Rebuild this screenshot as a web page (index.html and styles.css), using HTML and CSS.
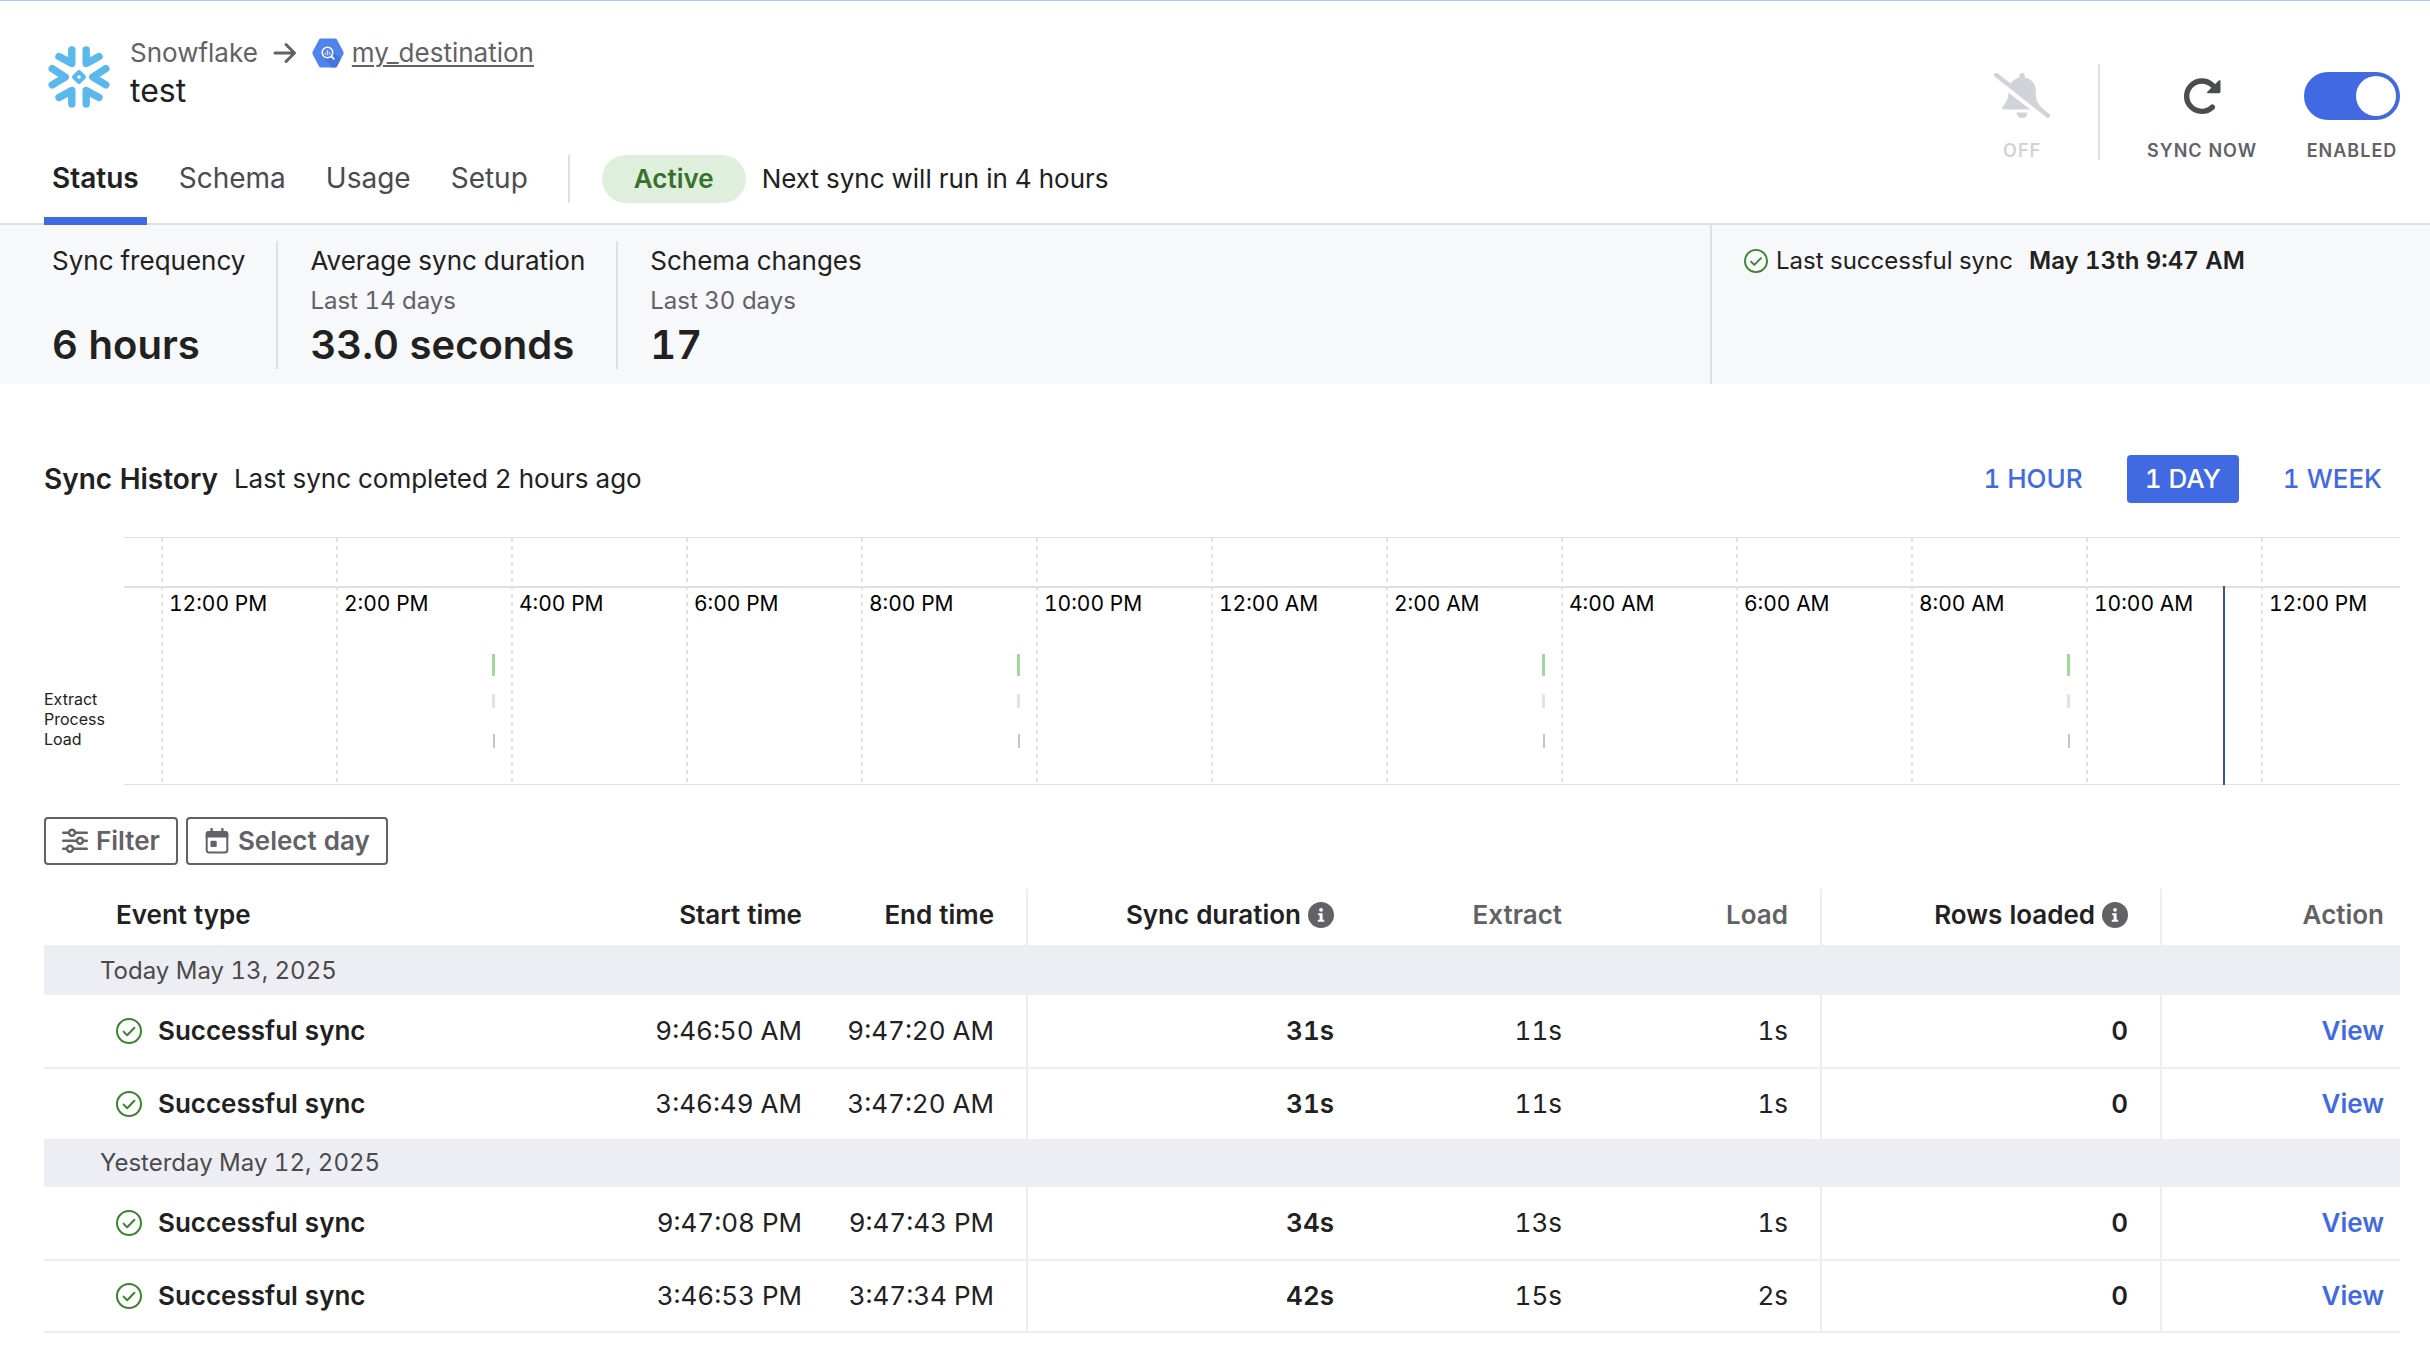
FILE: index.html
```html
<!DOCTYPE html>
<html lang="en">
<head>
<meta charset="utf-8">
<meta name="viewport" content="width=device-width, initial-scale=1">
<title>test – Connection status</title>
<link rel="stylesheet" href="styles.css">
</head>
<body>
<svg class="sprite" aria-hidden="true">
  <symbol id="check" viewBox="0 0 26 26">
    <circle cx="13" cy="13" r="12" fill="none" stroke="currentColor" stroke-width="2"/>
    <path d="M7.6 13.6l3.6 3.6 7.2-7.4" fill="none" stroke="currentColor" stroke-width="2" stroke-linecap="round" stroke-linejoin="round"/>
  </symbol>
  <symbol id="info" viewBox="0 0 26 26">
    <circle cx="13" cy="13" r="13" fill="currentColor"/>
    <circle cx="13" cy="7.8" r="1.9" fill="#fff"/>
    <path d="M10.2 11.2h4.4v6.6h1.6v2h-6.4v-2h1.8v-4.6h-1.4z" fill="#fff"/>
  </symbol>
</svg>

<header class="header">
  <div class="header-top">
    <svg class="logo" viewBox="0 0 62 62" aria-hidden="true">
      <g fill="none" stroke="#5bb8ec" stroke-width="7.4" stroke-linecap="round" stroke-linejoin="round">
        <path d="M23.8 4V17.6L11 10.6M38.2 4V17.6L51 10.6"/>
        <path d="M23.8 58V44.400L11 51.400M38.2 58V44.400L51 51.400"/>
        <path d="M4.200 22.700L17.200 31L4.200 38.800M57.800 22.700L44.800 31L57.800 38.800"/>
      </g>
      <path d="M31 26L36 31L31 36L26 31Z" fill="none" stroke="#5bb8ec" stroke-width="4" stroke-linejoin="round"/>
    </svg>
    <div class="titles">
      <div class="breadcrumb">
        <span>Snowflake</span>
        <svg class="arrow" viewBox="0 0 24 22" aria-hidden="true"><path d="M2 11H21M13 2.500L21.500 11L13 19.500" fill="none" stroke="currentColor" stroke-width="3" stroke-linecap="round" stroke-linejoin="round"/></svg>
        <svg class="hex" viewBox="0 0 32 30" aria-hidden="true">
          <path d="M9 0.500H23Q24.200 0.500 24.900 1.600L31.300 13.600Q32 15 31.300 16.400L24.900 28.400Q24.200 29.500 23 29.500H9Q7.800 29.500 7.100 28.400L0.700 16.400Q0 15 0.700 13.600L7.100 1.600Q7.800 0.500 9 0.500Z" fill="#5183ec"/>
          <path d="M21 13L28.500 21.500L24.900 28.400Q24.200 29.500 23 29.500H19.500L12 19.500Z" fill="#4674d8"/>
          <circle cx="15.500" cy="14.500" r="5.300" fill="#5183ec" stroke="#fff" stroke-width="1.500"/>
          <path d="M13.400 14.500v2M15.500 12v5.200M17.600 13.800v2.600" stroke="#cfdcfa" stroke-width="1.300"/>
          <path d="M19.400 18.400L21.800 20.800" stroke="#fff" stroke-width="1.800" stroke-linecap="round"/>
        </svg>
        <a class="dest" href="#destination">my_destination</a>
      </div>
      <h1 class="name">test</h1>
    </div>
  </div>

  <div class="header-bottom">
    <nav class="tabs" aria-label="Connection">
      <a class="tab active" href="#status">Status</a>
      <a class="tab" href="#schema">Schema</a>
      <a class="tab" href="#usage">Usage</a>
      <a class="tab" href="#setup">Setup</a>
    </nav>
    <div class="state">
      <span class="pill">Active</span>
      <span>Next sync will run in 4 hours</span>
    </div>
  </div>

  <div class="controls">
    <button class="control off" type="button">
      <svg class="control-icon" viewBox="0 0 56 48" aria-hidden="true">
        <path d="M28 1c1.700 0 2.800 1.200 2.800 3v1.600c6.600 1.200 11 6.400 11 13.200v4c0 4.600 1.600 8.200 4.700 11.600L49 38L15.500 13.300C17.800 9.200 21 6.500 25.300 5.600V4c0-1.800 1.100-3 2.700-3z" fill="currentColor"/>
        <path d="M14.300 20.500L36.300 37.600H9.800C8 37.600 7.600 35.600 8.700 34.400C12.400 30.400 14.300 26.800 14.300 22z" fill="currentColor"/>
        <path d="M22.500 40.600h11a5.500 5.500 0 0 1-11 0z" fill="currentColor"/>
        <path d="M2.200 3L53.800 43.600" stroke="currentColor" stroke-width="4.400" stroke-linecap="round"/>
      </svg>
      <span>OFF</span>
    </button>
    <button class="control sync" type="button">
      <svg class="control-icon" viewBox="0 0 56 48" aria-hidden="true">
        <path d="M38.300 35.200A15.200 15.200 0 1 1 38.600 13.400" fill="none" stroke="currentColor" stroke-width="5.400" stroke-linecap="round"/>
        <path d="M44.800 8.400Q46.500 7 46.500 9.400V19.500Q46.500 21.300 44.700 21.300H34.200Q32 21.300 33.600 19.600Z" fill="currentColor"/>
      </svg>
      <span>SYNC NOW</span>
    </button>
    <label class="control toggle">
      <input class="switch" type="checkbox" checked>
      <span>ENABLED</span>
    </label>
  </div>
</header>

<section class="summary">
  <dl class="stats">
    <div class="stat"><dt>Sync frequency</dt><dd class="value">6 hours</dd></div>
    <div class="stat"><dt>Average sync duration</dt><dd class="period">Last 14 days</dd><dd class="value">33.0 seconds</dd></div>
    <div class="stat"><dt>Schema changes</dt><dd class="period">Last 30 days</dd><dd class="value">17</dd></div>
  </dl>
  <div class="last-sync">
    <svg class="last-icon" aria-hidden="true"><use href="#check"/></svg>
    <span>Last successful sync</span>
    <strong>May 13th 9:47 AM</strong>
  </div>
</section>

<main class="main">
  <div class="history-head">
    <h2>Sync History</h2>
    <span>Last sync completed 2 hours ago</span>
    <div class="ranges">
      <button class="range" type="button">1 HOUR</button>
      <button class="range selected" type="button">1 DAY</button>
      <button class="range" type="button">1 WEEK</button>
    </div>
  </div>

  <div class="chart">
    <div class="lanes"><span>Extract</span><span>Process</span><span>Load</span></div>
    <div class="plot">
      <div class="ticks">
        <span class="lead"></span>
        <span>12:00 PM</span><span>2:00 PM</span><span>4:00 PM</span><span>6:00 PM</span><span>8:00 PM</span><span>10:00 PM</span><span>12:00 AM</span><span>2:00 AM</span><span>4:00 AM</span><span>6:00 AM</span><span>8:00 AM</span><span>10:00 AM</span><span>12:00 PM</span>
      </div>
      <div class="event" style="left:16.17%"><i></i><i></i><i></i></div>
      <div class="event" style="left:39.24%"><i></i><i></i><i></i></div>
      <div class="event" style="left:62.3%"><i></i><i></i><i></i></div>
      <div class="event" style="left:85.37%"><i></i><i></i><i></i></div>
      <div class="now" style="left:92.22%"></div>
    </div>
  </div>

  <div class="tools">
    <button class="tool" type="button">
      <svg viewBox="0 0 26 26" aria-hidden="true">
        <g fill="none" stroke="currentColor" stroke-width="2.400" stroke-linecap="round">
          <path d="M1.200 4.800H6.500M13.500 4.800H24.800M1.200 12.800H14.500M21.500 12.800H24.800M1.200 20.800H4.500M11.500 20.800H24.800"/>
          <circle cx="10" cy="4.800" r="3"/><circle cx="18" cy="12.800" r="3"/><circle cx="8" cy="20.800" r="3"/>
        </g>
      </svg>
      Filter
    </button>
    <button class="tool" type="button">
      <svg viewBox="0 0 26 26" aria-hidden="true">
        <rect x="2.700" y="4" width="20.600" height="20.500" rx="2.500" fill="none" stroke="currentColor" stroke-width="2"/>
        <path d="M1.700 9.500V6Q1.700 3 4.700 3H21.300Q24.300 3 24.300 6V9.500Z" fill="currentColor"/>
        <path d="M7.600 4V1M18.400 4V1" stroke="currentColor" stroke-width="2.400" stroke-linecap="round"/>
        <rect x="6.500" y="12.800" width="6.200" height="6.200" rx="1" fill="currentColor"/>
      </svg>
      Select day
    </button>
  </div>

  <table class="events">
    <colgroup><col><col class="c-start"><col class="c-end"><col class="c-sync"><col class="c-part"><col class="c-part"><col class="c-rows"><col class="c-action"></colgroup>
    <thead>
      <tr>
        <th class="type">Event type</th><th>Start time</th><th class="line">End time</th>
        <th>Sync duration <svg class="info" aria-hidden="true"><use href="#info"/></svg></th>
        <th class="dim">Extract</th><th class="dim line">Load</th>
        <th class="line">Rows loaded <svg class="info" aria-hidden="true"><use href="#info"/></svg></th>
        <th class="dim">Action</th>
      </tr>
    </thead>
    <tbody>
      <tr><th class="group" colspan="8">Today May 13, 2025</th></tr>
      <tr class="row"><td class="type"><svg class="ok" aria-hidden="true"><use href="#check"/></svg>Successful sync</td><td>9:46:50 AM</td><td class="line">9:47:20 AM</td><td class="strong">31s</td><td>11s</td><td class="line">1s</td><td class="strong line">0</td><td><a class="view" href="#sync-1">View</a></td></tr>
      <tr class="row"><td class="type"><svg class="ok" aria-hidden="true"><use href="#check"/></svg>Successful sync</td><td>3:46:49 AM</td><td class="line">3:47:20 AM</td><td class="strong">31s</td><td>11s</td><td class="line">1s</td><td class="strong line">0</td><td><a class="view" href="#sync-2">View</a></td></tr>
    </tbody>
    <tbody>
      <tr><th class="group" colspan="8">Yesterday May 12, 2025</th></tr>
      <tr class="row"><td class="type"><svg class="ok" aria-hidden="true"><use href="#check"/></svg>Successful sync</td><td>9:47:08 PM</td><td class="line">9:47:43 PM</td><td class="strong">34s</td><td>13s</td><td class="line">1s</td><td class="strong line">0</td><td><a class="view" href="#sync-3">View</a></td></tr>
      <tr class="row"><td class="type"><svg class="ok" aria-hidden="true"><use href="#check"/></svg>Successful sync</td><td>3:46:53 PM</td><td class="line">3:47:34 PM</td><td class="strong">42s</td><td>15s</td><td class="line">2s</td><td class="strong line">0</td><td><a class="view" href="#sync-4">View</a></td></tr>
    </tbody>
  </table>
</main>
</body>
</html>
```
FILE: styles.css
```css
:root {
  --text: #212121;
  --muted: #616166;
  --blue: #4169e1;
  --line: #dfe0e4;
  --soft: #edeef3;
  --green: #3d8132;
}

* { box-sizing: border-box; }

body {
  margin: 0;
  border-top: 1px solid #a8c7fa;
  background: #fff;
  color: var(--text);
  font: 400 26px/32px Inter, "Liberation Sans", sans-serif;
  font-variant-numeric: tabular-nums;
}

h1, h2, dl, dd { margin: 0; }
button { font: inherit; background: none; border: 0; padding: 0; cursor: pointer; }
svg { display: block; }
.sprite { position: absolute; width: 0; height: 0; }

/* Header */
.header {
  display: grid;
  grid-template-columns: 1fr auto;
  padding: 34px 30px 0 44px;
  border-bottom: 2px solid var(--line);
}
.header-top { display: flex; gap: 20px; padding: 2px 0 0 4px; height: 104px; }
.logo { width: 62px; height: 62px; margin-top: 9px; }
.breadcrumb { display: flex; align-items: center; color: var(--muted); }
.arrow { width: 24px; height: 22px; margin: 0 15px; }
.hex { width: 32px; height: 30px; margin-right: 8px; }
.dest { color: inherit; text-decoration-thickness: 2px; text-underline-offset: 3px; }
.name { margin-top: 2px; font-size: 32px; line-height: 40px; font-weight: 400; }

.header-bottom { display: flex; align-items: flex-start; grid-column: 1; }
.tabs { display: flex; gap: 24px; margin-bottom: -2px; }
.tab {
  height: 86px;
  padding: 19px 8px 0;
  border-bottom: 8px solid transparent;
  color: #4b4b4d;
  font-size: 28px;
  line-height: 40px;
  text-decoration: none;
}
.tab.active { border-color: var(--blue); color: var(--text); font-weight: 600; }
.state {
  display: flex;
  align-items: center;
  gap: 16px;
  height: 48px;
  margin: 16px 0 0 32px;
  padding-left: 32px;
  border-left: 2px solid var(--line);
}
.pill {
  padding: 8px 32px;
  border-radius: 24px;
  background: #deefdb;
  color: #38702d;
  font-weight: 600;
}

.controls { display: flex; grid-column: 2; grid-row: 1 / span 2; align-items: flex-start; padding-top: 29px; }
.control {
  display: flex;
  flex-direction: column;
  align-items: center;
  gap: 22px;
  height: 96px;
  padding-top: 8px;
  color: var(--muted);
  font-size: 18px;
  line-height: 18px;
  font-weight: 600;
  letter-spacing: 1px;
}
.control-icon { width: 56px; height: 48px; }
.control.off { padding-right: 48px; color: #d2d3d9; border-right: 2px solid var(--line); }
.control.sync { margin: 0 47px; }
.sync .control-icon { color: #4b4c4d; }
.switch {
  appearance: none;
  display: flex;
  justify-content: flex-end;
  width: 96px;
  height: 48px;
  margin: 0;
  padding: 4px;
  border-radius: 24px;
  background: var(--blue);
}
.switch::before { content: ""; width: 40px; height: 40px; border-radius: 50%; background: #fff; }

/* Summary */
.summary {
  display: flex;
  justify-content: space-between;
  min-height: 159px;
  background: #f7f8fa;
}
.stats { display: flex; padding: 16px 0 15px 20px; }
.stat {
  display: flex;
  flex-direction: column;
  padding: 4px 31px 0 32px;
  border-right: 2px solid var(--line);
}
.stat:last-child { border: 0; }
.period { margin-top: 8px; color: var(--muted); font-size: 24px; }
.value { margin-top: auto; font-size: 40px; line-height: 48px; font-weight: 600; }
.last-sync {
  display: flex;
  align-items: flex-start;
  flex: 0 0 720px;
  padding: 20px 32px;
  border-left: 2px solid var(--line);
  font-size: 24px;
}
.last-sync strong { margin-left: 16px; font-weight: 600; }
.last-icon { width: 24px; height: 24px; margin: 4px 8px 0 0; color: var(--green); }

/* History */
.main { padding: 71px 30px 15px 44px; }
.history-head { display: flex; align-items: center; gap: 16px; }
.history-head h2 { font-size: 28px; line-height: 32px; font-weight: 600; }
.ranges { display: flex; gap: 26px; margin-left: auto; }
.range {
  height: 48px;
  padding: 0 18px;
  border-radius: 4px;
  color: var(--blue);
  font-weight: 500;
}
.range.selected { background: var(--blue); color: #fff; }

.chart { display: flex; margin-top: 34px; }
.lanes {
  display: flex;
  flex-direction: column;
  flex: 0 0 80px;
  padding-top: 152px;
  font-size: 16px;
  line-height: 20px;
}
.plot {
  position: relative;
  flex: 1;
  height: 248px;
  border-top: 1px solid var(--line);
  border-bottom: 1px solid var(--line);
  background: linear-gradient(var(--line), var(--line)) 0 48px / 100% 2px no-repeat;
}
.ticks {
  display: grid;
  grid-template-columns: 37fr repeat(12, 175fr) 139fr;
  height: 244px;
  color: #000;
  font-size: 21px;
  line-height: 24px;
}
.ticks span {
  padding: 54px 0 0 8px;
  background: repeating-linear-gradient(#e1e2e5 0 4px, transparent 4px 8px) 0 0 / 2px 100% no-repeat;
}
.ticks .lead { background: none; }
.event { position: absolute; top: 116px; display: grid; width: 3px; }
.event i { width: 3px; height: 14px; margin-bottom: 26px; background: #e1e2ea; }
.event i:first-child { height: 22px; margin-bottom: 18px; background: #a5d6a0; }
.event i:last-child { width: 2px; margin: 0 0 0 1px; background: #c6c6c8; }
.now { position: absolute; top: 48px; bottom: -1px; width: 2px; background: #3b50a0; }

.tools { display: flex; gap: 8px; margin-top: 32px; }
.tool {
  display: flex;
  align-items: center;
  gap: 8px;
  height: 48px;
  padding: 0 16px;
  border: 2px solid var(--muted);
  border-radius: 4px;
  color: var(--muted);
  font-weight: 600;
}
.tool svg { width: 26px; height: 26px; }

/* Events table */
.events { width: 100%; margin-top: 24px; table-layout: fixed; border-collapse: separate; border-spacing: 0; }
.c-start { width: 196px; }
.c-end { width: 194px; }
.c-sync { width: 338px; }
.c-part { width: 228px; }
.c-rows { width: 340px; }
.c-action { width: 238px; }
.events th, .events td { padding: 0 32px 0 0; text-align: right; white-space: nowrap; }
.events thead th { height: 58px; padding-bottom: 4px; border-bottom: 2px solid var(--soft); font-weight: 600; }
.events tr > :last-child { padding-right: 16px; }
.events thead .dim { color: var(--muted); }
.events .line { border-right: 2px solid var(--soft); }
.events .type { padding-left: 72px; text-align: left; font-weight: 600; }
.events .group {
  height: 48px;
  padding-left: 56px;
  background: var(--soft);
  color: #4b4b4d;
  font-size: 24px;
  font-weight: 400;
  text-align: left;
}
.row td { height: 74px; border-bottom: 2px solid var(--soft); }
.row:last-child td { height: 70px; border-bottom: 0; }
tbody:last-child .row:last-child td { height: 72px; border-bottom: 2px solid var(--soft); }
.row .strong { font-weight: 600; }
.ok, .info { display: inline-block; width: 26px; height: 26px; vertical-align: -4px; }
.ok { margin-right: 16px; color: var(--green); }
.info { color: var(--muted); }
.view { color: var(--blue); font-weight: 600; text-decoration: none; }
```
